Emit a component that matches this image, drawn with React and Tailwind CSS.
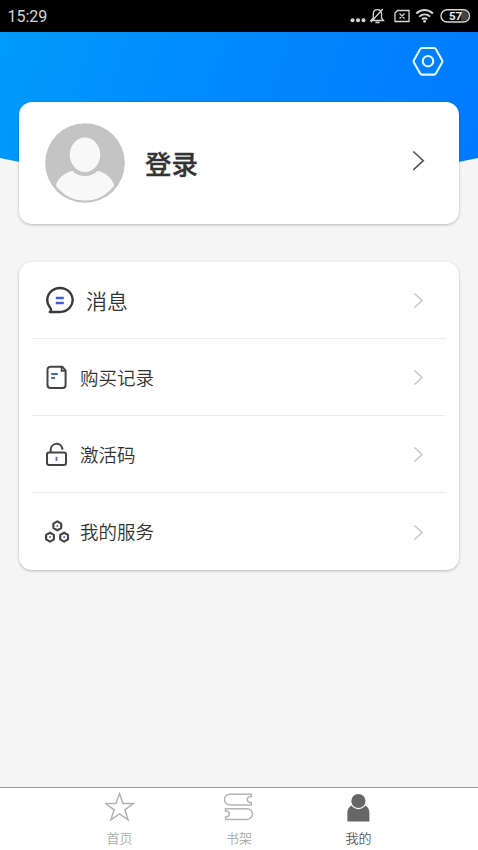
const MENU = [
  { key: "message", label: "消息", icon: MessageIcon, large: true },
  { key: "orders", label: "购买记录", icon: OrdersIcon },
  { key: "code", label: "激活码", icon: LockIcon },
  { key: "service", label: "我的服务", icon: ServiceIcon },
];

const TABS = [
  { key: "home", label: "首页", icon: StarIcon },
  { key: "shelf", label: "书架", icon: BooksIcon },
  { key: "me", label: "我的", icon: PersonIcon },
];

function MessageIcon() {
  return (
    <svg width="30" height="30" viewBox="0 0 30 30" fill="none">
      <path
        d="M4.8 27 C6.6 25.600 6.4 24.200 4.800 22.200 A12.700 12 0 1 1 15 27 Z"
        stroke="#3a3a3e"
        strokeWidth="2.4"
        strokeLinejoin="round"
      />
      <path d="M10.800 13h8M10.800 18h8" stroke="#3c5fd2" strokeWidth="2.400" />
    </svg>
  );
}

function OrdersIcon() {
  return (
    <svg width="24" height="26" viewBox="0 0 24 26" fill="none">
      <path
        d="M5.500 2.700h11.800l3.300 3.800V21a3 3 0 0 1-3 3H5.500a3 3 0 0 1-3-3V5.700a3 3 0 0 1 3-3z"
        stroke="#444447"
        strokeWidth="2"
      />
      <path d="M16.600 2.700v4.100h4" stroke="#444447" strokeWidth="1.700" />
      <path d="M6.200 10h6.600M6.200 14h3.800" stroke="#4265cc" strokeWidth="1.800" />
    </svg>
  );
}

function LockIcon() {
  return (
    <svg width="24" height="26" viewBox="0 0 24 26" fill="none" stroke="#444447" strokeWidth="2">
      <rect x="2" y="11.600" width="19" height="12.400" rx="2" />
      <path d="M5.700 11.300V8.700a5.900 5.900 0 0 1 11.600-1.500v1.600" />
      <path d="M11.500 15.800v4" stroke="#5868a8" strokeWidth="1.800" />
    </svg>
  );
}

function ServiceIcon() {
  return (
    <svg width="25" height="26" viewBox="0 0 25 26" fill="none" stroke="#444449" strokeWidth="2.200">
      <path d="M12.300 2.400l3.900 2.200v4.500l-3.900 2.200-3.900-2.200V4.600z" strokeLinejoin="round" />
      <path d="M5 13.700l3.900 2.200v4.500L5 22.600l-3.900-2.200v-4.500z" strokeLinejoin="round" />
      <path d="M19.100 13.700l3.900 2.200v4.500l-3.900 2.200-3.900-2.200v-4.500z" strokeLinejoin="round" />
      <g fill="#5b6bb0" stroke="none">
        <circle cx="12.300" cy="6.900" r="1" />
        <circle cx="5" cy="18.100" r="1" />
        <circle cx="19.100" cy="18.100" r="1" />
      </g>
    </svg>
  );
}

function StarIcon() {
  return (
    <svg width="30" height="30" viewBox="0 0 30 30" fill="none">
      <path
        d="M14.500 1.600l3.500 10h10.300l-8.400 6.200 3.200 10-8.600-6-8.600 6 3.200-10-8.400-6.200H11z"
        stroke="#b4b4b4"
        strokeWidth="1.500"
      />
    </svg>
  );
}

function BooksIcon() {
  return (
    <svg width="30" height="30" viewBox="0 0 30 30" fill="none" stroke="#b4b4b4" strokeWidth="1.500">
      <path d="M27.300 2.200H5.800a5.300 5.300 0 0 0 0 10.700h21.500v-2.400c-2.500.2-4-1-4-3s1.500-3.200 4-2.900z" />
      <path d="M1.500 16.700h21.600a5.300 5.300 0 0 1 0 10.700H1.500V25c2.500-.2 3.700-1.300 3.700-3s-1.200-2.800-3.700-2.900z" />
    </svg>
  );
}

function PersonIcon() {
  return (
    <svg width="30" height="30" viewBox="0 0 30 30" fill="#666">
      <path d="M3.400 29.500V21c0-4.200 2.300-7.300 6-8.300h10c3.700 1 6 4.100 6 8.300v8.500z" />
      <circle cx="14.400" cy="9" r="7.700" stroke="#fff" strokeWidth="1.200" />
    </svg>
  );
}

function Avatar() {
  return (
    <svg width="80" height="80" viewBox="0 0 80 80">
      <circle cx="40" cy="40" r="39.800" fill="#c4c4c4" />
      <path
        d="M10.800 62.500C13 55 19.500 49.500 28 47.800h24c8.500 1.700 15 7.200 17.200 14.700C62 72.500 51.500 77.600 40 77.600S18 72.500 10.800 62.500z"
        fill="#f8f8f8"
      />
      <ellipse cx="40" cy="31.800" rx="17.200" ry="19.200" fill="#f8f8f8" stroke="#c4c4c4" strokeWidth="4" />
    </svg>
  );
}

function StatusBar() {
  return (
    <div className="flex h-8 shrink-0 items-center justify-between bg-black pl-[7.500px] pr-[7px] text-[#d6d6d6]">
      <span className="pt-0.5 font-[Roboto,sans-serif] text-[16px]">15:29</span>
      <svg width="122" height="18" viewBox="0 0 122 18" fill="none" stroke="currentColor" strokeWidth="1.300">
        <g fill="currentColor" stroke="none">
          <circle cx="3.500" cy="13.200" r="2" />
          <circle cx="9" cy="13.200" r="2" />
          <circle cx="14.500" cy="13.200" r="2" />
        </g>
        <path d="M22 13.500h12.500l-2-2.500V7c0-2.500-1.500-4.300-4-4.300S24.300 4.500 24.300 7v4zM26.500 15.500h4M22 15L33.800 2" />
        <path d="M48.500 3.500H60v11H46v-8.500zM50.500 6.500l5 5M55.500 6.500l-5 5" />
        <g strokeWidth="1.900">
          <path d="M67.300 6.500c5-4.600 11.600-4.600 16.600 0" />
          <path d="M70.200 9.600c3.300-2.900 7.600-2.900 10.900 0" />
          <path d="M73 12.300c1.700-1.400 3.600-1.400 5.300 0" />
        </g>
        <circle cx="75.600" cy="14.300" r="1.400" fill="currentColor" stroke="none" />
        <path d="M112 4h2.500a4.800 4.800 0 0 1 0 9.700H112z" fill="#444" stroke="none" />
        <rect x="92" y="2.700" width="28.500" height="12.300" rx="6.100" strokeWidth="1.400" />
        <text
          x="106.500"
          y="13"
          textAnchor="middle"
          fill="#eee"
          stroke="none"
          className="font-[Roboto,sans-serif] text-[11.500px] font-bold"
        >
          57
        </text>
      </svg>
    </div>
  );
}

export default function App() {
  return (
    <main className="flex h-[850px] w-[478px] flex-col overflow-hidden bg-[#f5f5f5] font-['Noto_Sans_CJK_SC',sans-serif] text-[#333]">
      <StatusBar />

      <header className="flex h-[150px] shrink-0 justify-end bg-linear-[110deg,#009bfb_0%,#0087ff_50%,#007aff_100%] pt-[14px] pr-[33px] [clip-path:circle(1150px_at_50%_-999px)]">
        <svg width="34" height="32" viewBox="0 0 34 32" fill="none" stroke="#e2f8ff" strokeWidth="2.100">
          <path
            d="M11 2h12c.8 0 1.400.3 1.800 1l6.400 11.400c.3.600.3 1.200 0 1.800l-6.400 11.400c-.4.700-1 1-1.800 1H11c-.8 0-1.400-.3-1.800-1L2.800 16.200c-.3-.6-.3-1.200 0-1.800L9.200 3c.4-.7 1-1 1.800-1z"
            strokeLinejoin="round"
          />
          <circle cx="17" cy="15.200" r="5.200" />
        </svg>
      </header>

      {/* pulled up over the blue header */}
      <section className="z-10 mx-[19px] -mt-20 flex h-[122px] shrink-0 items-center rounded-[13px] bg-white pl-[26px] pr-[34px] shadow-[0_1px_3px_rgba(0,0,0,0.25)]">
        <Avatar />
        <h1 className="ml-5 flex-1 pt-px text-[26.500px] leading-none font-medium [-webkit-text-stroke:0.3px_#333]">
          登录
        </h1>
        <svg className="-mt-1" width="14" height="22" viewBox="0 0 14 22" fill="none" stroke="#555" strokeWidth="1.600">
          <path d="M2.300 1.500l10 9.200-10 9.200" />
        </svg>
      </section>

      <section className="mx-[19px] mt-[38px] shrink-0 rounded-[13px] bg-white px-[13px] shadow-[0_1px_3px_rgba(0,0,0,0.25)]">
        {MENU.map(({ key, label, icon: Icon, large }) => (
          <div
            key={key}
            className="flex h-[77px] items-center border-b border-[#ededed] pl-[13px] pr-[22px] last:border-b-0"
          >
            <Icon />
            <span
              className={`flex-1 leading-none font-[350] ${
                large
                  ? "ml-[11px] text-[21px]"
                  : key === "service"
                    ? "ml-[10px] text-[18.500px]"
                    : "ml-[11px] text-[18.500px]"
              }`}
            >
              {label}
            </span>
            <svg width="12" height="18" viewBox="0 0 12 18" fill="none" stroke="#c8c8c8" strokeWidth="1.600">
              <path d="M2.500 2.500l7.500 7-7.500 7" />
            </svg>
          </div>
        ))}
      </section>

      <nav className="mt-auto flex h-[63px] shrink-0 justify-center border-t border-[#999] bg-white">
        {TABS.map(({ key, label, icon: Icon }) => (
          <div
            key={key}
            className={`flex w-[119.500px] flex-col items-center pt-1 ${
              key === "me" ? "text-[#555]" : "text-[#aaa]"
            }`}
          >
            <Icon />
            <span className="mt-[9px] text-[13px] leading-none font-[350]">{label}</span>
          </div>
        ))}
      </nav>
    </main>
  );
}
